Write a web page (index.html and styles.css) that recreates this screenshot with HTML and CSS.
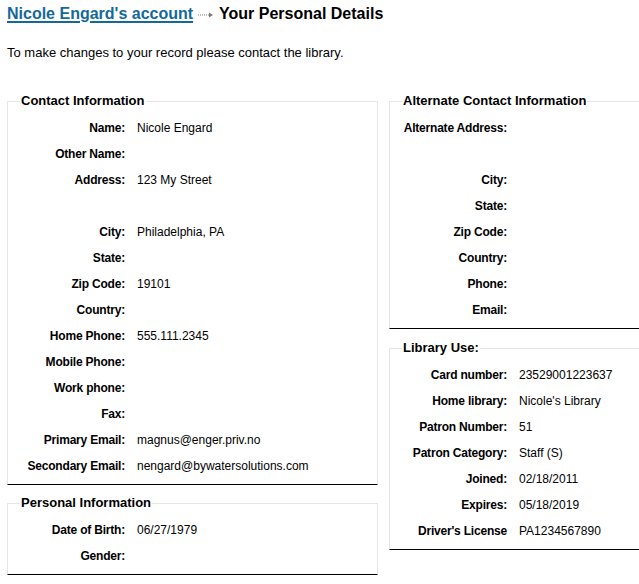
FILE: index.html
```html
<!DOCTYPE html>
<html lang="en">
<head>
<meta charset="utf-8">
<title>Your Personal Details</title>
<link rel="stylesheet" href="styles.css">
</head>
<body>
<h1 class="title"><a class="title-link" href="#">Nicole Engard's account</a><svg class="crumb-arrow" width="20" height="8" viewBox="0 0 20 8" aria-hidden="true"><line x1="2" y1="4" x2="13" y2="4" stroke="#7a7a7a" stroke-width="1" stroke-dasharray="1 1"/><polygon points="13,1.5 17,4 13,6.5" fill="#7a7a7a"/></svg>Your Personal Details</h1>
<p class="intro">To make changes to your record please contact the library.</p>
<div class="columns">
  <div class="col">
    <fieldset class="panel">
      <legend class="panel-title">Contact Information</legend>
      <dl class="fields">
        <dt>Name:</dt><dd>Nicole Engard</dd>
        <dt>Other Name:</dt><dd></dd>
        <dt>Address:</dt><dd>123 My Street</dd>
        <dt></dt><dd></dd>
        <dt>City:</dt><dd>Philadelphia, PA</dd>
        <dt>State:</dt><dd></dd>
        <dt>Zip Code:</dt><dd>19101</dd>
        <dt>Country:</dt><dd></dd>
        <dt>Home Phone:</dt><dd>555.111.2345</dd>
        <dt>Mobile Phone:</dt><dd></dd>
        <dt>Work phone:</dt><dd></dd>
        <dt>Fax:</dt><dd></dd>
        <dt>Primary Email:</dt><dd>magnus@enger.priv.no</dd>
        <dt>Secondary Email:</dt><dd>nengard@bywatersolutions.com</dd>
      </dl>
    </fieldset>
    <fieldset class="panel">
      <legend class="panel-title">Personal Information</legend>
      <dl class="fields">
        <dt>Date of Birth:</dt><dd>06/27/1979</dd>
        <dt>Gender:</dt><dd></dd>
      </dl>
    </fieldset>
  </div>
  <div class="col col-right">
    <fieldset class="panel">
      <legend class="panel-title">Alternate Contact Information</legend>
      <dl class="fields">
        <dt>Alternate Address:</dt><dd></dd>
        <dt></dt><dd></dd>
        <dt>City:</dt><dd></dd>
        <dt>State:</dt><dd></dd>
        <dt>Zip Code:</dt><dd></dd>
        <dt>Country:</dt><dd></dd>
        <dt>Phone:</dt><dd></dd>
        <dt>Email:</dt><dd></dd>
      </dl>
    </fieldset>
    <fieldset class="panel">
      <legend class="panel-title">Library Use:</legend>
      <dl class="fields">
        <dt>Card number:</dt><dd>23529001223637</dd>
        <dt>Home library:</dt><dd>Nicole's Library</dd>
        <dt>Patron Number:</dt><dd>51</dd>
        <dt>Patron Category:</dt><dd>Staff (S)</dd>
        <dt>Joined:</dt><dd>02/18/2011</dd>
        <dt>Expires:</dt><dd>05/18/2019</dd>
        <dt>Driver's License</dt><dd>PA1234567890</dd>
      </dl>
    </fieldset>
  </div>
</div>
</body>
</html>
```
FILE: styles.css
```css
body {
  margin: 0;
  padding: 4px 0 0 7px;
  font-family: "Liberation Sans", Arial, Helvetica, sans-serif;
  color: #000;
  background: #fff;
}
.title {
  margin: 0;
  font-size: 16px;
  line-height: 20px;
  font-weight: bold;
  display: flex;
  align-items: center;
}
.title-link {
  color: #13699c;
  text-decoration: underline;
  text-decoration-thickness: 2px;
  text-underline-offset: 2px;
}
.crumb-arrow {
  margin: 1px 3px 0 3px;
  flex: none;
}
.intro {
  margin: 21px 0 0 0;
  font-size: 13px;
  line-height: 16px;
}
.columns {
  margin-top: 32px;
  display: grid;
  grid-template-columns: 371px 1fr;
  column-gap: 11px;
  align-items: start;
}
.col {
  display: flex;
  flex-direction: column;
  gap: 10px;
  min-width: 0;
}
.col-right {
  gap: 11px;
}
.panel {
  margin: 0;
  padding: 6px 0 5px 0;
  border: 1px solid #e6e6e6;
  border-bottom: 1px solid #000;
  min-width: 0;
}
.col-right .panel {
  border-right: none;
}
.panel-title {
  margin-left: 12px;
  padding: 0 1px;
  font-size: 13px;
  line-height: 16px;
  font-weight: bold;
  white-space: nowrap;
}
.fields {
  margin: 0;
  display: grid;
  grid-template-columns: 117px 1fr;
  grid-auto-rows: 26px;
  column-gap: 12px;
  align-items: center;
  font-size: 12px;
  line-height: 14px;
}
.fields dt {
  font-weight: bold;
  text-align: right;
  white-space: nowrap;
  letter-spacing: -0.2px;
  display: flex;
  justify-content: flex-end;
}
.fields dd {
  margin: 0;
  white-space: nowrap;
}
```
